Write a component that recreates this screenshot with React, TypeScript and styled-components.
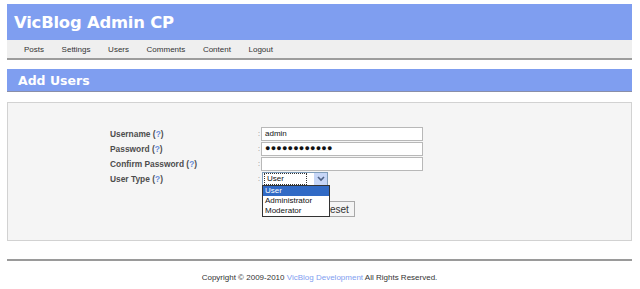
import React from 'react';
import styled, { createGlobalStyle } from 'styled-components';

const GlobalStyle = createGlobalStyle`
	html, body {
		margin: 0;
		padding: 0;
		background: #ffffff;
	}
	body {
		font-family: "Liberation Sans", Arial, sans-serif;
		font-size: 8px;
		color: #333;
	}
`;

const Page = styled.div`
	width: 625px;
	padding: 4px 8px 0 7px;
`;

const Header = styled.div`
	height: 36px;
	background: #7f9ef0;
	display: flex;
	align-items: center;
	padding-left: 7px;
`;

const Logo = styled.h1`
	margin: 0;
	font-family: "DejaVu Sans", Verdana, sans-serif;
	font-weight: bold;
	font-size: 16.4px;
	color: #ffffff;
	letter-spacing: -0.2px;
`;

const Nav = styled.ul`
	margin: 0;
	list-style: none;
	height: 18px;
	background: #efefef;
	border-bottom: 2px solid #9c9c9c;
	display: flex;
	align-items: center;
	padding: 0 0 0 17px;
	gap: 17.6px;
`;

const NavItem = styled.li`
	font-size: 8px;
	color: #333;
`;

const SectionTitle = styled.h2`
	margin: 9px 0 0;
	height: 22px;
	background: #7f9ef0;
	border-bottom: 1px solid #8a8fa8;
	display: flex;
	align-items: center;
	padding-left: 11px;
	font-family: "DejaVu Sans", Verdana, sans-serif;
	font-weight: bold;
	font-size: 12.5px;
	color: #ffffff;
`;

const Panel = styled.div`
	margin-top: 10px;
	height: 114px;
	background: #f5f5f5;
	border: 1px solid #d2d2d2;
	padding: 23px 0 0 102px;
`;

const Form = styled.div`
	display: grid;
	grid-template-columns: 148px 3px 162px;
	grid-template-rows: repeat(4, 15px) auto;
	align-items: center;
`;

const Label = styled.span`
	font-weight: bold;
	font-size: 8.4px;
	color: #4d4d4d;
`;

const Help = styled.span`
	color: #6b8fd9;
`;

const Colon = styled.span`
	font-size: 7px;
	color: #777;
`;

const Input = styled.div`
	height: 12px;
	background: #ffffff;
	border: 1px solid #b8b8b8;
	display: flex;
	align-items: center;
	padding-left: 3px;
	font-size: 8px;
	color: #111;
`;

const Dots = styled.span`
	font-size: 9px;
	letter-spacing: 0.2px;
	line-height: 1;
`;

const SelectWrap = styled.div`
	position: relative;
	width: 66px;
	height: 14px;
	margin-left: 1px;
`;

const SelectBox = styled.div`
	height: 12px;
	background: #fff;
	border: 1px solid #7f9db9;
	display: flex;
	align-items: center;
	justify-content: space-between;
`;

const SelectValue = styled.span`
	margin-left: 1px;
	padding: 0 22px 0 2px;
	height: 10px;
	line-height: 10px;
	border: 1px dotted #333;
	font-size: 8px;
	color: #111;
`;

const Arrow = styled.span`
	width: 13px;
	height: 12px;
	background: #c6d6f7;
	display: flex;
	align-items: center;
	justify-content: center;
`;

const DropList = styled.ul`
	position: absolute;
	left: 0;
	top: 13px;
	margin: 0;
	padding: 0;
	list-style: none;
	width: 66px;
	background: #fff;
	border: 1px solid #333;
	z-index: 2;
`;

const Option = styled.li<{ $active?: boolean }>`
	height: 10px;
	line-height: 10px;
	padding-left: 2px;
	font-size: 8px;
	background: ${ ({ $active }) => ($active ? '#316ac5' : '#fff') };
	color: ${ ({ $active }) => ($active ? '#fff' : '#111') };
`;

const Buttons = styled.div`
	grid-column: 3;
	margin-top: 15px;
	margin-left: 1px;
	display: flex;
	gap: 1px;
`;

const Button = styled.button`
	height: 16px;
	padding: 0 5px;
	background: #f4f4f4;
	border: 1px solid #a8a8a8;
	font-family: "Liberation Sans", Arial, sans-serif;
	font-size: 10px;
	color: #333;
`;

const Footer = styled.div`
	margin-top: 18px;
	border-top: 2px solid #9a9a9a;
	padding-top: 12px;
	text-align: center;
	font-size: 8px;
	color: #333;
`;

const FooterLink = styled.span`
	color: #7f9ef0;
`;

const navItems = ['Posts', 'Settings', 'Users', 'Comments', 'Content', 'Logout'];

function Field({ label }: { label: string }) {
	return (
		<Label>
			{ label } (<Help>?</Help>)
		</Label>
	);
}

function App() {
	return (
		<>
			<GlobalStyle />
			<Page>
				<Header>
					<Logo>VicBlog Admin CP</Logo>
				</Header>
				<Nav>
					{ navItems.map((item) => <NavItem key={ item }>{ item }</NavItem>) }
				</Nav>
				<SectionTitle>Add Users</SectionTitle>
				<Panel>
					<Form>
						<Field label="Username" />
						<Colon>:</Colon>
						<Input>admin</Input>

						<Field label="Password" />
						<Colon>:</Colon>
						<Input><Dots>●●●●●●●●●●●●</Dots></Input>

						<Field label="Confirm Password" />
						<Colon>:</Colon>
						<Input />

						<Field label="User Type" />
						<Colon>:</Colon>
						<SelectWrap>
							<SelectBox>
								<SelectValue>User</SelectValue>
								<Arrow>
									<svg width="8" height="6" viewBox="0 0 8 6">
										<path d="M1 1 L4 4 L7 1" fill="none" stroke="#4d6185" strokeWidth="1.6" />
									</svg>
								</Arrow>
							</SelectBox>
							<DropList>
								<Option $active>User</Option>
								<Option>Administrator</Option>
								<Option>Moderator</Option>
							</DropList>
						</SelectWrap>

						<Buttons>
							<Button>Add User</Button>
							<Button>Reset</Button>
						</Buttons>
					</Form>
				</Panel>
				<Footer>
					Copyright © 2009-2010 <FooterLink>VicBlog Development</FooterLink> All Rights Reserved.
				</Footer>
			</Page>
		</>
	);
}

export default App;
